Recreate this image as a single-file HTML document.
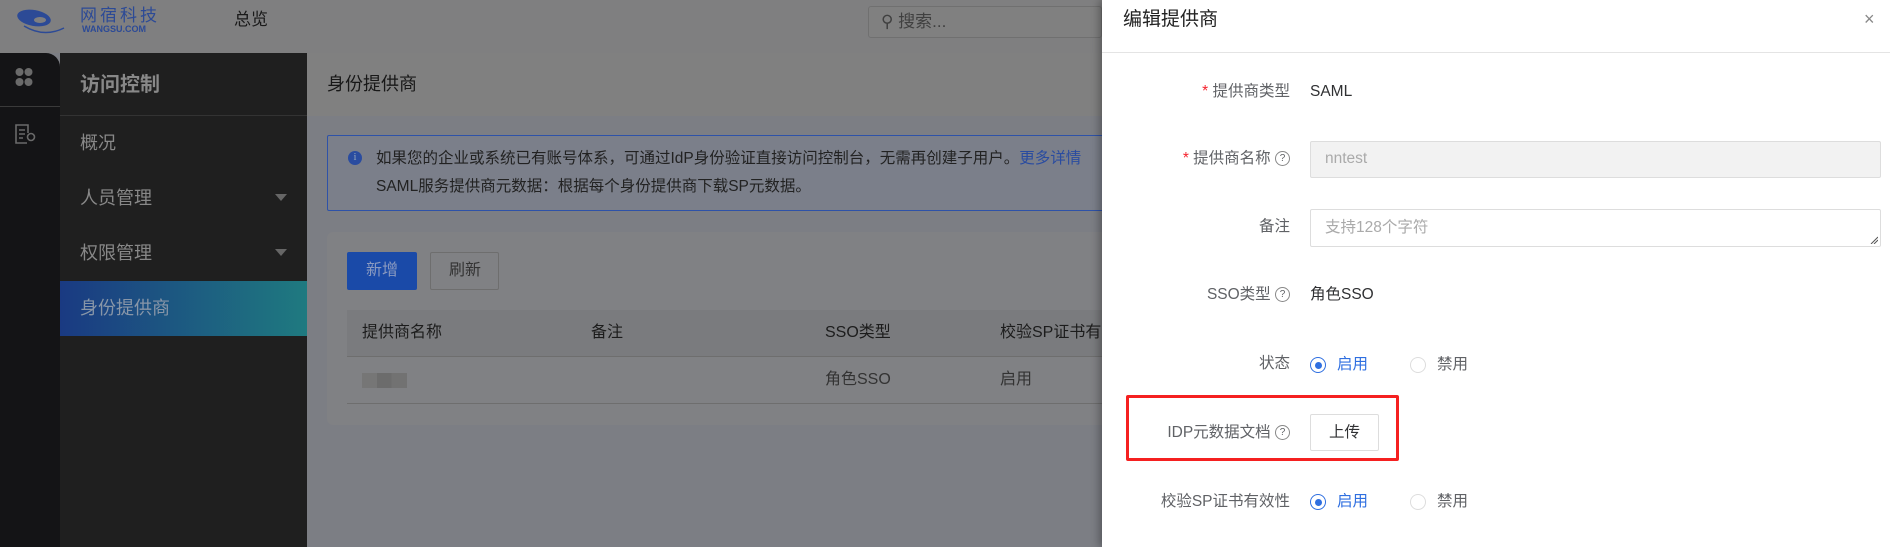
<!DOCTYPE html>
<html><head><meta charset="utf-8"><style>
*{margin:0;padding:0;box-sizing:border-box}
body{width:1890px;height:547px;overflow:hidden;position:relative;font-family:"Liberation Sans","Noto Sans CJK SC",sans-serif;background:#7c7e84}
.a{position:absolute}
.t{position:absolute;white-space:nowrap;line-height:1}
.q{display:inline-block;width:15px;height:15px;border:1px solid #888;border-radius:50%;font-size:10px;line-height:13px;text-align:center;vertical-align:middle}
</style></head><body>
<div class="a" style="left:0;top:0;width:1102px;height:53px;background:#7f7f80"></div>
<svg class="a" style="left:14px;top:6px" width="52" height="30" viewBox="0 0 52 30"><ellipse cx="20" cy="12" rx="17" ry="8" fill="#2c4a96" transform="rotate(10 20 12)"/><ellipse cx="26" cy="14" rx="6" ry="3" fill="#7f7f80"/><path d="M10 20 Q30 32 50 22" stroke="#2c4a96" stroke-width="1.5" fill="none"/></svg>
<div class="t" style="left:80px;top:7px;font-size:17px;color:#2c4a96;letter-spacing:3px">网宿科技</div>
<div class="t" style="left:82px;top:25px;font-size:9px;font-weight:bold;color:#2c4a96">WANGSU.COM</div>
<div class="t" style="left:234px;top:11px;font-size:17px;color:#1a1a1a">总览</div>
<div class="a" style="left:868px;top:6px;width:234px;height:32px;background:#808080;border-radius:3px;border:1px solid #707070"></div>
<div class="t" style="left:881px;top:13px;font-size:17px;color:#404040">⚲ 搜索...</div>
<div class="a" style="left:0;top:53px;width:60px;height:494px;background:#141416;border-top-right-radius:14px"></div>
<div class="a" style="left:0;top:106px;width:60px;height:1px;background:#3a3a3a"></div>
<svg class="a" style="left:15px;top:67px" width="18" height="20" viewBox="0 0 18 20"><circle cx="4.5" cy="5" r="4" fill="#6a6a6a"/><circle cx="13.5" cy="5" r="4" fill="#6a6a6a"/><circle cx="4.5" cy="15" r="4" fill="#6a6a6a"/><circle cx="13.5" cy="15" r="4" fill="#6a6a6a"/></svg>
<svg class="a" style="left:14px;top:123px" width="24" height="22" viewBox="0 0 24 22" fill="none" stroke="#6a6a6a" stroke-width="1.6"><path d="M13 20H2V2h12v8"/><path d="M5 7h6M5 11h6M5 15h4"/><circle cx="17" cy="14" r="3.5"/></svg>
<div class="a" style="left:60px;top:53px;width:247px;height:494px;background:#1f1f1f"></div>
<div class="t" style="left:80px;top:75px;font-size:20px;font-weight:bold;color:#888">访问控制</div>
<div class="a" style="left:60px;top:115px;width:247px;height:1px;background:#333"></div>
<div class="t" style="left:80px;top:134px;font-size:18px;color:#888">概况</div>
<div class="t" style="left:80px;top:189px;font-size:18px;color:#888">人员管理</div>
<div class="t" style="left:80px;top:244px;font-size:18px;color:#888">权限管理</div>
<svg class="a" style="left:275px;top:194px" width="12" height="8"><path d="M0 0h12L6 7z" fill="#666"/></svg>
<svg class="a" style="left:275px;top:249px" width="12" height="8"><path d="M0 0h12L6 7z" fill="#666"/></svg>
<div class="a" style="left:60px;top:281px;width:247px;height:55px;background:linear-gradient(90deg,#1a3a82,#1f7a80)"></div>
<div class="t" style="left:80px;top:299px;font-size:18px;color:#8896a8">身份提供商</div>
<div class="a" style="left:307px;top:53px;width:795px;height:63px;background:#808080"></div>
<div class="t" style="left:327px;top:75px;font-size:18px;color:#181818">身份提供商</div>
<div class="a" style="left:327px;top:135px;width:800px;height:76px;background:#7b7f8a;border:1px solid #2e52a8;border-radius:2px"></div>
<div class="a" style="left:348px;top:151px;width:14px;height:14px;border-radius:50%;background:#2a4ca0;color:#9ab;font-size:10px;text-align:center;line-height:14px;font-family:'Liberation Serif',serif">i</div>
<div class="t" style="left:376px;top:151px;font-size:15.5px;color:#222">如果您的企业或系统已有账号体系，可通过IdP身份验证直接访问控制台，无需再创建子用户。<span style="color:#2a4ca0">更多详情</span></div>
<div class="t" style="left:376px;top:179px;font-size:15.5px;color:#222">SAML服务提供商元数据：根据每个身份提供商下载SP元数据。</div>
<div class="a" style="left:327px;top:232px;width:800px;height:193px;background:#808184;border-radius:6px"></div>
<div class="a" style="left:347px;top:252px;width:70px;height:38px;background:#1a4aa8;border-radius:2px"></div>
<div class="t" style="left:366px;top:263px;font-size:16px;color:#8a9ac0">新增</div>
<div class="a" style="left:430px;top:252px;width:69px;height:38px;border:1px solid #6e6e6e;border-radius:2px"></div>
<div class="t" style="left:449px;top:263px;font-size:16px;color:#333">刷新</div>
<div class="a" style="left:347px;top:310px;width:760px;height:47px;background:#7a7b7e;border-bottom:1px solid #6e6e6e"></div>
<div class="t" style="left:362px;top:325px;font-size:16px;color:#1c1c1c">提供商名称</div>
<div class="t" style="left:591px;top:325px;font-size:16px;color:#1c1c1c">备注</div>
<div class="t" style="left:825px;top:325px;font-size:16px;color:#1c1c1c">SSO类型</div>
<div class="t" style="left:1000px;top:325px;font-size:16px;color:#1c1c1c">校验SP证书有效性</div>
<div class="a" style="left:347px;top:403px;width:760px;height:1px;background:#6e6e6e"></div>
<div class="a" style="left:362px;top:373px;width:45px;height:15px;background:linear-gradient(90deg,#767676 33%,#6c6c6c 33%,#6c6c6c 66%,#727272 66%)"></div>
<div class="t" style="left:825px;top:372px;font-size:16px;color:#333">角色SSO</div>
<div class="t" style="left:1000px;top:372px;font-size:16px;color:#333">启用</div>
<div class="a" style="left:1102px;top:0;width:788px;height:547px;background:#fff;box-shadow:-3px 0 8px rgba(0,0,0,.3)"></div>
<div class="t" style="left:1123px;top:10px;font-size:19px;color:#222">编辑提供商</div>
<div class="t" style="left:1864px;top:10px;font-size:18px;color:#888">×</div>
<div class="a" style="left:1102px;top:52px;width:788px;height:1px;background:#e4e4e4"></div>
<div style="position:absolute;left:1102px;top:0;width:188px;font-size:15.5px;line-height:16px;color:#606266;text-align:right">
<div class="a" style="right:0;top:84px;white-space:nowrap"><span style="color:#f5222d">*</span> 提供商类型</div>
<div class="a" style="right:0;top:151px;white-space:nowrap"><span style="color:#f5222d">*</span> 提供商名称 <span class="q">?</span></div>
<div class="a" style="right:0;top:219px;white-space:nowrap">备注</div>
<div class="a" style="right:0;top:287px;white-space:nowrap">SSO类型 <span class="q">?</span></div>
<div class="a" style="right:0;top:356px;white-space:nowrap">状态</div>
<div class="a" style="right:0;top:425px;white-space:nowrap">IDP元数据文档 <span class="q">?</span></div>
<div class="a" style="right:0;top:494px;white-space:nowrap">校验SP证书有效性</div>
</div>
<div class="t" style="left:1310px;top:84px;font-size:15.5px;color:#303133">SAML</div>
<div class="a" style="left:1310px;top:141px;width:571px;height:37px;background:#f2f2f2;border:1px solid #ddd;border-radius:2px"></div>
<div class="t" style="left:1325px;top:151px;font-size:15.5px;color:#aaa">nntest</div>
<div class="a" style="left:1310px;top:209px;width:571px;height:38px;background:#fff;border:1px solid #ddd;border-radius:2px"></div>
<div class="t" style="left:1325px;top:220px;font-size:15.5px;color:#aaa">支持128个字符</div>
<svg class="a" style="left:1870px;top:236px" width="8" height="8"><path d="M1 8L8 1M4 8L8 4" stroke="#555" stroke-width="1"/></svg>
<div class="t" style="left:1310px;top:287px;font-size:15.5px;color:#303133">角色SSO</div>
<div class="a" style="left:1310px;top:357px;width:16px;height:16px;border:1px solid #2f6fe0;border-radius:50%"></div>
<div class="a" style="left:1314.5px;top:361.5px;width:7px;height:7px;background:#2f6fe0;border-radius:50%"></div>
<div class="t" style="left:1337px;top:357px;font-size:15.5px;color:#2f6fe0">启用</div>
<div class="a" style="left:1410px;top:357px;width:16px;height:16px;border:1px solid #ddd;border-radius:50%"></div>
<div class="t" style="left:1437px;top:357px;font-size:15.5px;color:#606266">禁用</div>
<div class="a" style="left:1126px;top:395px;width:273px;height:66px;border:3px solid #f52020;border-radius:2px"></div>
<div class="a" style="left:1310px;top:414px;width:69px;height:37px;border:1px solid #ddd;border-radius:2px"></div>
<div class="t" style="left:1329px;top:425px;font-size:15.5px;color:#303133">上传</div>
<div class="a" style="left:1310px;top:494px;width:16px;height:16px;border:1px solid #2f6fe0;border-radius:50%"></div>
<div class="a" style="left:1314.5px;top:498.5px;width:7px;height:7px;background:#2f6fe0;border-radius:50%"></div>
<div class="t" style="left:1337px;top:494px;font-size:15.5px;color:#2f6fe0">启用</div>
<div class="a" style="left:1410px;top:494px;width:16px;height:16px;border:1px solid #ddd;border-radius:50%"></div>
<div class="t" style="left:1437px;top:494px;font-size:15.5px;color:#606266">禁用</div>
</body></html>
